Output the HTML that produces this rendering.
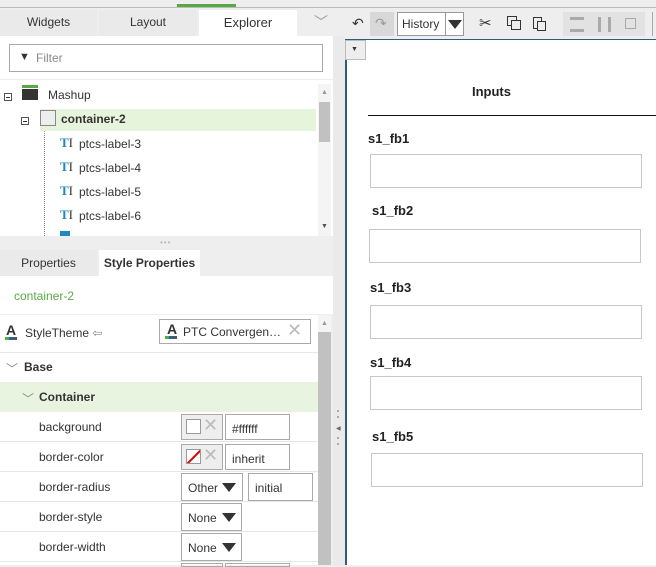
<!DOCTYPE html>
<html><head><meta charset="utf-8"><style>
*{box-sizing:border-box;margin:0;padding:0}
body{width:656px;height:565px;overflow:hidden;background:#eeeeee;font-family:"Liberation Sans",Arial,sans-serif;font-size:12px;color:#333;position:relative}
.a{position:absolute}
.lbl{font-size:12px;color:#333}
.box{position:absolute;background:#fff;border:1px solid #c8c8c8}
.row{position:absolute;left:0;width:318px;height:30px;border-bottom:1px solid #e6e6e6;background:#fff}
.row span.n{position:absolute;left:39px;top:8px;font-size:12px;color:#333}
.sel{position:absolute;height:28px;border:1px solid #aaa;background:#fff;font-size:12px;padding:7px 0 0 6px}
.tri{position:absolute;width:0;height:0;border-left:7px solid transparent;border-right:7px solid transparent;border-top:9px solid #333}
.fb{position:absolute;font-weight:bold;font-size:13px;color:#222}
.inp{position:absolute;width:272px;height:34px;border:1px solid #c8c8c8;background:#fff}
</style></head><body>
<!-- top line -->
<div class="a" style="left:0;top:7px;width:656px;height:1px;background:#bbb"></div>
<div class="a" style="left:177px;top:4px;width:59px;height:3px;background:#5aa845"></div>
<!-- tabs -->
<div class="a" style="left:0;top:10px;width:97px;height:26px;background:#eaeaea;text-align:center;padding-top:5px">Widgets</div>
<div class="a" style="left:99px;top:10px;width:98px;height:26px;background:#eaeaea;text-align:center;padding-top:5px">Layout</div>
<div class="a" style="left:199px;top:10px;width:98px;height:26px;background:#fff;text-align:center;padding-top:5px;font-size:13px">Explorer</div>
<div class="a" style="left:314px;top:12px;color:#999;font-size:14px">﹀</div>
<!-- explorer panel -->
<div class="a" style="left:0;top:36px;width:333px;height:200px;background:#fff"></div>
<div class="a" style="left:9px;top:44px;width:314px;height:28px;border:1px solid #aaa;background:#fff"></div>
<div class="a" style="left:19px;top:51px;font-size:11px;color:#333">▼</div>
<div class="a" style="left:36px;top:51px;color:#888">Filter</div>
<div class="a" style="left:0;top:79px;width:333px;height:1px;background:#eee"></div>
<!-- tree -->
<div class="a" style="left:4px;top:93px;width:8px;height:8px;border:1px solid #555;background:#fff"></div>
<div class="a" style="left:6px;top:97px;width:4px;height:1px;background:#333"></div>
<div class="a" style="left:22px;top:85px;width:16px;height:3px;background:#5aa845"></div>
<div class="a" style="left:22px;top:89px;width:16px;height:11px;background:#333"></div>
<div class="a" style="left:48px;top:88px;font-size:12px">Mashup</div>
<div class="a" style="left:40px;top:109px;width:276px;height:22px;background:#e6f4dc"></div>
<div class="a" style="left:21px;top:117px;width:8px;height:8px;border:1px solid #555;background:#fff"></div>
<div class="a" style="left:23px;top:121px;width:4px;height:1px;background:#333"></div>
<div class="a" style="left:40px;top:110px;width:16px;height:16px;border:1px solid #888;background:#eee"></div>
<div class="a" style="left:61px;top:112px;font-weight:bold;font-size:12px">container-2</div>
<div class="a" style="left:44px;top:131px;width:0;height:105px;border-left:1px dotted #888"></div>
<div class="a" style="left:60px;top:135px;color:#1c8ac0;font-weight:bold;font-family:'Liberation Serif',serif;font-size:13px">T<span style="font-weight:normal;color:#333">I</span></div>
<div class="a" style="left:79px;top:137px">ptcs-label-3</div>
<div class="a" style="left:60px;top:159px;color:#1c8ac0;font-weight:bold;font-family:'Liberation Serif',serif;font-size:13px">T<span style="font-weight:normal;color:#333">I</span></div>
<div class="a" style="left:79px;top:161px">ptcs-label-4</div>
<div class="a" style="left:60px;top:183px;color:#1c8ac0;font-weight:bold;font-family:'Liberation Serif',serif;font-size:13px">T<span style="font-weight:normal;color:#333">I</span></div>
<div class="a" style="left:79px;top:185px">ptcs-label-5</div>
<div class="a" style="left:60px;top:207px;color:#1c8ac0;font-weight:bold;font-family:'Liberation Serif',serif;font-size:13px">T<span style="font-weight:normal;color:#333">I</span></div>
<div class="a" style="left:79px;top:209px">ptcs-label-6</div>
<div class="a" style="left:60px;top:231px;width:10px;height:5px;background:#1c8ac0"></div>
<div class="a" style="left:318px;top:84px;width:13px;height:152px;background:#f4f4f4"></div>
<div class="a" style="left:319px;top:102px;width:11px;height:40px;background:#c1c1c1"></div>
<div class="a" style="left:321px;top:89px;font-size:7px;color:#999">▲</div>
<div class="a" style="left:321px;top:223px;font-size:7px;color:#555">▼</div>
<div class="a" style="left:160px;top:238px;font-size:8px;color:#bbb;letter-spacing:1px">•••</div>
<!-- property tabs -->
<div class="a" style="left:0;top:250px;width:97px;height:26px;background:#eaeaea;text-align:center;padding-top:6px">Properties</div>
<div class="a" style="left:99px;top:250px;width:101px;height:26px;background:#fff;text-align:center;padding-top:6px;font-weight:bold;font-size:12px">Style Properties</div>
<div class="a" style="left:0;top:276px;width:333px;height:38px;background:#fff"></div>
<div class="a" style="left:14px;top:289px;color:#5aa845">container-2</div>
<!-- style theme -->
<div class="a" style="left:0;top:315px;width:318px;height:250px;background:#fff"></div>
<div class="a" style="left:6px;top:322px;font-weight:bold;font-size:14px;color:#333">A</div>
<div class="a" style="left:5px;top:337px;width:4px;height:3px;background:#5aa845"></div><div class="a" style="left:9px;top:337px;width:4px;height:3px;background:#1c6a9c"></div><div class="a" style="left:13px;top:337px;width:4px;height:3px;background:#555"></div>
<div class="a" style="left:25px;top:326px">StyleTheme <span style="color:#888">⇦</span></div>
<div class="a" style="left:159px;top:319px;width:152px;height:25px;border:1px solid #aaa;background:#fff"></div>
<div class="a" style="left:167px;top:321px;font-weight:bold;font-size:14px">A</div>
<div class="a" style="left:165px;top:336px;width:4px;height:3px;background:#5aa845"></div><div class="a" style="left:169px;top:336px;width:4px;height:3px;background:#1c6a9c"></div><div class="a" style="left:173px;top:336px;width:4px;height:3px;background:#555"></div>
<div class="a" style="left:183px;top:325px;font-size:12px">PTC Convergen…</div>
<div class="a" style="left:287px;top:320px;font-size:18px;color:#bbb">✕</div>
<div class="a" style="left:0;top:352px;width:318px;height:1px;background:#e6e6e6"></div>
<div class="a" style="left:6px;top:360px;color:#888;font-size:12px">﹀</div>
<div class="a" style="left:24px;top:360px;font-weight:bold;color:#333">Base</div>
<div class="a" style="left:0;top:382px;width:318px;height:30px;background:#e8f3e0"></div>
<div class="a" style="left:22px;top:390px;color:#888">﹀</div>
<div class="a" style="left:39px;top:390px;font-weight:bold">Container</div>
<div class="row" style="top:412px"><span class="n">background</span></div>
<div class="row" style="top:442px"><span class="n">border-color</span></div>
<div class="row" style="top:472px"><span class="n">border-radius</span></div>
<div class="row" style="top:502px"><span class="n">border-style</span></div>
<div class="row" style="top:532px"><span class="n">border-width</span></div>
<div class="a" style="left:181px;top:414px;width:42px;height:26px;border:1px solid #aaa;background:#eee"></div>
<div class="a" style="left:186px;top:419px;width:15px;height:15px;border:1px solid #999;background:#fff"></div>
<div class="a" style="left:203px;top:415px;font-size:18px;color:#bbb">✕</div>
<div class="sel" style="left:225px;top:414px;width:65px;height:26px">#ffffff</div>
<div class="a" style="left:181px;top:444px;width:42px;height:26px;border:1px solid #aaa;background:#eee"></div>
<div class="a" style="left:186px;top:449px;width:15px;height:15px;border:1px solid #999;background:#fff;overflow:hidden"><div style="position:absolute;left:-3px;top:6px;width:20px;height:2px;background:#d00;transform:rotate(-45deg)"></div></div>
<div class="a" style="left:203px;top:445px;font-size:18px;color:#bbb">✕</div>
<div class="sel" style="left:225px;top:444px;width:65px;height:26px">inherit</div>
<div class="sel" style="left:181px;top:473px;width:62px">Other</div><div class="tri" style="left:222px;top:483px"></div>
<div class="sel" style="left:248px;top:473px;width:65px">initial</div>
<div class="sel" style="left:181px;top:503px;width:61px">None</div><div class="tri" style="left:222px;top:513px"></div>
<div class="sel" style="left:181px;top:533px;width:61px">None</div><div class="tri" style="left:222px;top:543px"></div>
<div class="a" style="left:181px;top:563px;width:42px;height:4px;border:1px solid #aaa"></div>
<div class="a" style="left:225px;top:563px;width:65px;height:4px;border:1px solid #aaa"></div>
<div class="a" style="left:318px;top:315px;width:13px;height:250px;background:#f4f4f4"></div>
<div class="a" style="left:318px;top:332px;width:13px;height:233px;background:#c1c1c1"></div>
<div class="a" style="left:321px;top:320px;font-size:7px;color:#999">▲</div>
<!-- splitter -->
<div class="a" style="left:333px;top:36px;width:12px;height:529px;background:#eaeaea"></div>
<div class="a" style="left:337px;top:410px;width:2px;height:8px;border-top:2px dotted #aaa;border-bottom:2px dotted #aaa"></div>
<div class="a" style="left:336px;top:425px;font-size:6px;color:#666">◀</div>
<div class="a" style="left:337px;top:437px;width:2px;height:8px;border-top:2px dotted #aaa;border-bottom:2px dotted #aaa"></div>
<!-- toolbar -->
<div class="a" style="left:352px;top:15px;font-size:14px;color:#333">↶</div>
<div class="a" style="left:370px;top:12px;width:24px;height:24px;background:#d8d8d8"></div>
<div class="a" style="left:375px;top:15px;font-size:14px;color:#999">↷</div>
<div class="a" style="left:397px;top:12px;width:67px;height:24px;border:1px solid #999;background:#fff"></div>
<div class="a" style="left:402px;top:17px;font-size:12px">History</div>
<div class="a" style="left:445px;top:12px;width:1px;height:24px;background:#999"></div>
<div class="tri" style="left:448px;top:20px"></div>
<div class="a" style="left:479px;top:14px;font-size:15px;color:#333">✂</div>
<div class="a" style="left:507px;top:16px;width:10px;height:10px;border:1.5px solid #333"></div>
<div class="a" style="left:511px;top:20px;width:10px;height:10px;border:1.5px solid #333;background:#eee"></div>
<div class="a" style="left:533px;top:17px;width:9px;height:12px;border:1.5px solid #333"></div>
<div class="a" style="left:537px;top:21px;width:9px;height:10px;border:1.5px solid #333;background:#eee"></div>
<div class="a" style="left:563px;top:12px;width:82px;height:24px;background:#e2e2e2"></div>
<div class="a" style="left:570px;top:17px;width:14px;height:3px;background:#aaa"></div>
<div class="a" style="left:570px;top:29px;width:14px;height:3px;background:#aaa"></div>
<div class="a" style="left:598px;top:17px;width:3px;height:15px;background:#aaa"></div>
<div class="a" style="left:608px;top:17px;width:3px;height:15px;background:#aaa"></div>
<div class="a" style="left:625px;top:18px;width:11px;height:11px;border:1px solid #aaa"></div>
<div class="a" style="left:652px;top:12px;width:1px;height:24px;background:#aaa"></div>
<!-- canvas -->
<div class="a" style="left:345px;top:39px;width:311px;height:526px;background:#fff;border-left:2px solid #2d5d7e;border-top:1px solid #2d5d7e"></div>
<div class="a" style="left:345px;top:40px;width:21px;height:20px;background:#eee;border:1px solid #bbb"></div>
<div class="a" style="left:351px;top:46px;font-size:7px;color:#333">▼</div>
<div class="a" style="left:472px;top:84px;font-weight:bold;font-size:13px;color:#222">Inputs</div>
<div class="a" style="left:368px;top:115px;width:288px;height:1px;background:#111"></div>
<div class="fb" style="left:368px;top:131px">s1_fb1</div>
<div class="inp" style="left:370px;top:154px"></div>
<div class="fb" style="left:372px;top:203px">s1_fb2</div>
<div class="inp" style="left:369px;top:229px"></div>
<div class="fb" style="left:370px;top:280px">s1_fb3</div>
<div class="inp" style="left:370px;top:305px"></div>
<div class="fb" style="left:370px;top:355px">s1_fb4</div>
<div class="inp" style="left:370px;top:376px"></div>
<div class="fb" style="left:372px;top:429px">s1_fb5</div>
<div class="inp" style="left:371px;top:453px"></div>
</body></html>
